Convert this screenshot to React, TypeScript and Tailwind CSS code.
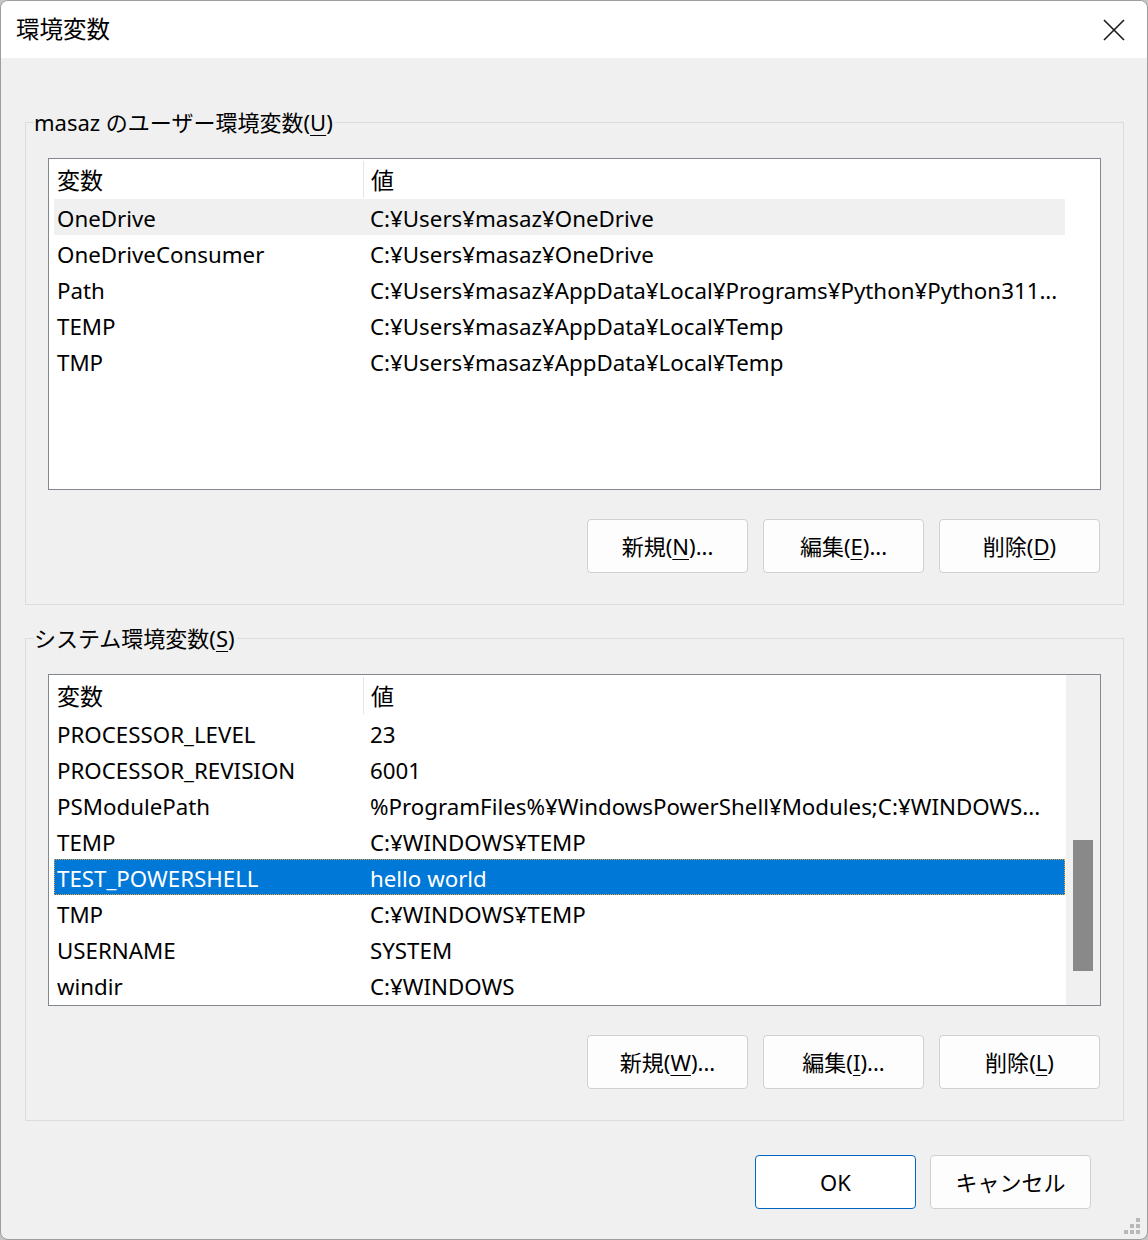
import clsx from "clsx";
import type { ReactNode } from "react";

type EnvVar = { name: string; value: string };

const userVars: EnvVar[] = [
  { name: "OneDrive", value: "C:¥Users¥masaz¥OneDrive" },
  { name: "OneDriveConsumer", value: "C:¥Users¥masaz¥OneDrive" },
  { name: "Path", value: "C:¥Users¥masaz¥AppData¥Local¥Programs¥Python¥Python311..." },
  { name: "TEMP", value: "C:¥Users¥masaz¥AppData¥Local¥Temp" },
  { name: "TMP", value: "C:¥Users¥masaz¥AppData¥Local¥Temp" },
];

const systemVars: EnvVar[] = [
  { name: "PROCESSOR_LEVEL", value: "23" },
  { name: "PROCESSOR_REVISION", value: "6001" },
  { name: "PSModulePath", value: "%ProgramFiles%¥WindowsPowerShell¥Modules;C:¥WINDOWS..." },
  { name: "TEMP", value: "C:¥WINDOWS¥TEMP" },
  { name: "TEST_POWERSHELL", value: "hello world" },
  { name: "TMP", value: "C:¥WINDOWS¥TEMP" },
  { name: "USERNAME", value: "SYSTEM" },
  { name: "windir", value: "C:¥WINDOWS" },
];

// underlined access key, like (N)
const Key = ({ k }: { k: string }) => (
  <>
    (<span className="underline decoration-1 underline-offset-[4px]">{k}</span>)
  </>
);

function DlgButton({ children, primary }: { children: ReactNode; primary?: boolean }) {
  return (
    <button
      className={clsx(
        "flex h-[54px] w-[161px] items-center justify-center rounded-[4px] border text-[22px] text-black",
        primary ? "border-[#0067c0] bg-white" : "border-[#d0d0d0] bg-[#fdfdfd]"
      )}
    >
      {children}
    </button>
  );
}

function VarList({
  rows,
  hovered,
  selected,
  scroll,
}: {
  rows: EnvVar[];
  hovered?: number;
  selected?: number;
  scroll?: boolean;
}) {
  return (
    <div className="flex h-[332px] border border-[#828790] bg-white">
      <div className="flex w-[1016px] flex-col overflow-hidden">
        {/* column header */}
        <div className="flex h-[40px] shrink-0 items-center pt-[3px] text-[23px]">
          <div className="w-[314px] pl-[8px]">変数</div>
          <div className="-mt-[3px] h-full w-px bg-[#e5e5e5]" />
          <div className="pl-[7px]">値</div>
        </div>
        {rows.map((r, i) => (
          <div
            key={r.name + i}
            className={clsx(
              "ml-[5px] flex h-[36px] w-[1011px] shrink-0 items-center whitespace-nowrap pt-[4px] text-[22.3px]",
              i === hovered && "bg-[#f0f0f0]",
              i === selected &&
                "bg-[#0078d7] text-white outline-1 -outline-offset-1 outline-dotted outline-[#e8a23c]"
            )}
          >
            <div className="w-[309px] pl-[3px]">{r.name}</div>
            <div className="flex-1 overflow-hidden pl-[7px]">{r.value}</div>
          </div>
        ))}
      </div>
      {scroll && (
        <div className="ml-px flex-1 bg-[#f0f0f0]">
          <div className="ml-[7px] mt-[165px] h-[131px] w-[20px] bg-[#898989]" />
        </div>
      )}
    </div>
  );
}

function Group({ label, children }: { label: ReactNode; children: ReactNode }) {
  return (
    <fieldset className="border border-[#dcdcdc] px-[22px] pb-[31px] pt-[21px]">
      <legend className="-ml-[14px] pr-[2px] text-[22px] leading-[30px]">{label}</legend>
      {children}
    </fieldset>
  );
}

export default function App() {
  return (
    <div className="h-[1240px] w-[1148px] bg-[#c4c4c4] font-[family-name:'Noto_Sans','Noto_Sans_CJK_JP',sans-serif] text-[22px] text-black">
      <div className="relative flex h-full w-full flex-col overflow-hidden rounded-[8px] border border-[#9d9d9d] bg-[#f0f0f0]">
        {/* title bar */}
        <div className="flex h-[57px] shrink-0 items-center justify-between bg-white pl-[15px] pr-[22px]">
          <span className="text-[23.5px] leading-none">環境変数</span>
          <svg width="22" height="22" viewBox="0 0 22 22" className="mt-px">
            <path d="M1 1 L21 21 M21 1 L1 21" stroke="#1a1a1a" strokeWidth="1.6" fill="none" />
          </svg>
        </div>

        <div className="flex flex-col pl-[24px] pr-[23px] pt-[49px]">
          <Group
            label={
              <>
                masaz のユーザー環境変数<Key k="U" />
              </>
            }
          >
            <VarList rows={userVars} hovered={0} />
            <div className="mt-[29px] flex justify-end gap-[15px] pr-px">
              <DlgButton>
                新規<Key k="N" />...
              </DlgButton>
              <DlgButton>
                編集<Key k="E" />...
              </DlgButton>
              <DlgButton>
                削除<Key k="D" />
              </DlgButton>
            </div>
          </Group>

          <div className="mt-[18px]">
            <Group
              label={
                <>
                  システム環境変数<Key k="S" />
                </>
              }
            >
              <VarList rows={systemVars} selected={4} scroll />
              <div className="mt-[29px] flex justify-end gap-[15px] pr-px">
                <DlgButton>
                  新規<Key k="W" />...
                </DlgButton>
                <DlgButton>
                  編集<Key k="I" />...
                </DlgButton>
                <DlgButton>
                  削除<Key k="L" />
                </DlgButton>
              </div>
            </Group>
          </div>

          <div className="mt-[34px] flex justify-end gap-[14px] pr-[33px]">
            <DlgButton primary>OK</DlgButton>
            <DlgButton>キャンセル</DlgButton>
          </div>
        </div>

        {/* size grip */}
        <svg width="20" height="20" viewBox="0 0 20 20" className="absolute bottom-[3px] right-[5px]">
          <g fill="#b9b9b9">
            <rect x="14" y="2" width="4" height="4" />
            <rect x="8" y="8" width="4" height="4" />
            <rect x="14" y="8" width="4" height="4" />
            <rect x="2" y="14" width="4" height="4" />
            <rect x="8" y="14" width="4" height="4" />
            <rect x="14" y="14" width="4" height="4" />
          </g>
        </svg>
      </div>
    </div>
  );
}
